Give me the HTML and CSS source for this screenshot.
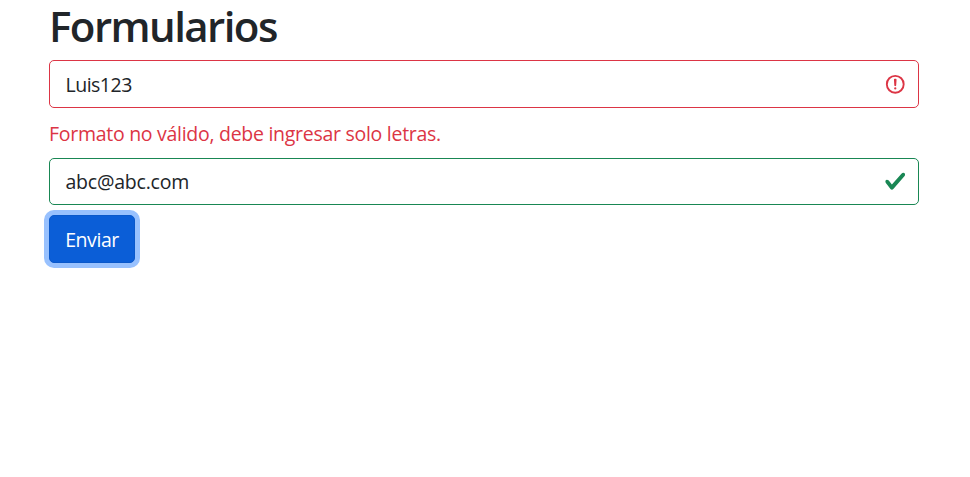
FILE: index.html
```html
<!DOCTYPE html>
<html lang="es">
<head>
<meta charset="utf-8">
<title>Formularios</title>
<link rel="stylesheet" href="styles.css">
</head>
<body>
<main class="container">
  <h1 class="title"><span>Formularios</span></h1>
  <form class="form">
    <div class="field field-invalid">
      <span class="value value-name">Luis123</span>
      <svg class="icon" viewBox="0 0 12 12" fill="none" stroke="#dc3545"><circle cx="6" cy="6" r="4.5"/><path stroke-linejoin="round" d="M5.8 3.6h.4L6 6.5z"/><circle cx="6" cy="8.2" r=".6" fill="#dc3545" stroke="none"/></svg>
    </div>
    <p class="feedback"><span>Formato no válido, debe ingresar solo letras.</span></p>
    <div class="field field-valid">
      <span class="value value-mail">abc@abc.com</span>
      <svg class="icon" viewBox="0 0 8 8"><path fill="#198754" d="M2.3 6.73L.6 4.53c-.4-1.04.46-1.4 1.1-.8l1.1 1.4 3.4-3.8c.6-.63 1.6-.27 1.2.7l-4 4.6c-.43.5-.8.4-1.1.1z"/></svg>
    </div>
    <button class="button" type="button"><span>Enviar</span></button>
  </form>
</main>
</body>
</html>
```
FILE: styles.css
```css
* { box-sizing: border-box; }
body {
  margin: 0;
  min-height: 100vh;
  background: #fff;
  color: #212529;
  font: 400 19.5px/30px "Open Sans", "Noto Sans", sans-serif;
}
.container { width: 870px; min-height: 100vh; margin-left: 49px; }
.title {
  margin: 0;
  height: 60px;
  font-size: 42px;
  line-height: 52px;
  font-weight: 600;
  letter-spacing: -1.55px;
}
.form { display: flex; flex-direction: column; align-items: flex-start; }
.field {
  width: 100%;
  height: 48px;
  display: flex;
  align-items: center;
  justify-content: space-between;
  padding: 0 11.25px 0 15.5px;
  border: 1px solid;
  border-radius: 5px;
}
.field-invalid { border-color: #dc3545; }
.field-valid { border-color: #198754; height: 47px; }
.value-name { padding-top: 2px; letter-spacing: -0.5px; }
.value-mail { letter-spacing: -0.22px; }
.icon { width: 22.5px; height: 22.5px; }
.feedback { margin: 11px 0 9px; color: #dc3545; letter-spacing: -0.28px; }
.button {
  width: 86px;
  height: 48px;
  margin-top: 10px;
  padding: 2px 0 0;
  border: 1px solid #0a58ca;
  border-radius: 5px;
  background: #0b5ed7;
  box-shadow: 0 0 0 5px #98c1fe;
  color: #fff;
  font: inherit;
  letter-spacing: -0.45px;
}
```
